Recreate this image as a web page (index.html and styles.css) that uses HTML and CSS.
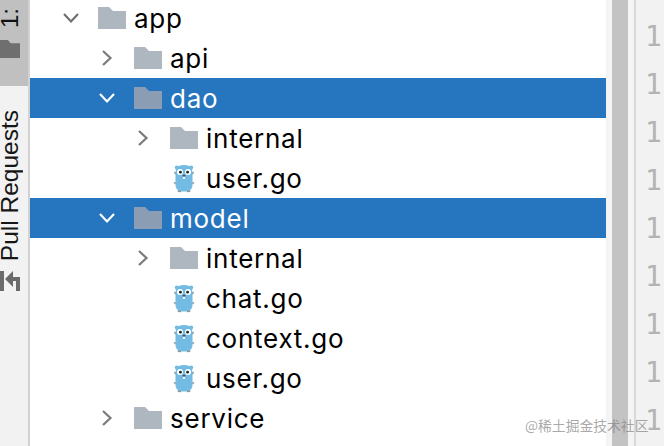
FILE: index.html
```html
<!DOCTYPE html>
<html lang="en">
<head>
<meta charset="utf-8">
<title>Project tree</title>
<link rel="stylesheet" href="styles.css">
</head>
<body>
<svg class="defs" width="0" height="0" aria-hidden="true">
  <defs>
    <symbol id="folder" viewBox="0 0 28 22" preserveAspectRatio="none"><path d="M0 0H11L15 4H28V22H0Z"/></symbol>
    <symbol id="chev-down" viewBox="0 0 18 12"><path d="M2 2L9 9.500L16 2" fill="none" stroke="currentColor" stroke-width="2.200"/></symbol>
    <symbol id="chev-right" viewBox="0 0 12 18"><path d="M2 2L9.500 9L2 16" fill="none" stroke="currentColor" stroke-width="2.200"/></symbol>
    <symbol id="gopher" viewBox="0 0 22 29">
      <ellipse cx="2.600" cy="9" rx="1.600" ry="1.200" fill="#8fa3ad"/>
      <ellipse cx="19.400" cy="9" rx="1.600" ry="1.200" fill="#8fa3ad"/>
      <ellipse cx="2.200" cy="19" rx="1.600" ry="1" fill="#9aa8ae"/>
      <ellipse cx="19.800" cy="19" rx="1.600" ry="1" fill="#9aa8ae"/>
      <ellipse cx="6.500" cy="27" rx="2" ry="1.300" fill="#8b979c"/>
      <ellipse cx="15.500" cy="27" rx="2" ry="1.300" fill="#8b979c"/>
      <circle cx="4" cy="3.600" r="2.200" fill="#74b9e0"/>
      <circle cx="18" cy="3.600" r="2.200" fill="#74b9e0"/>
      <path d="M11 1C17 1 19.500 4.500 19.500 9V21C19.500 25.500 16 27.500 11 27.500C6 27.500 2.500 25.500 2.500 21V9C2.500 4.500 5 1 11 1Z" fill="#74bbe3"/>
      <circle cx="7" cy="8" r="3" fill="#fff"/>
      <circle cx="15" cy="8" r="3" fill="#fff"/>
      <circle cx="7.400" cy="8.200" r="1.400" fill="#1c2228"/>
      <circle cx="14.600" cy="8.200" r="1.400" fill="#1c2228"/>
      <ellipse cx="11" cy="11.800" rx="1.500" ry="1" fill="#54443c"/>
      <rect x="10" y="12.800" width="2" height="2" fill="#fff"/>
    </symbol>
  </defs>
</svg>
<div class="window">
  <aside class="rail">
    <div class="rail-active">
      <span class="rail-num">1:</span>
      <svg class="rail-folder" width="20" height="18"><use href="#folder"/></svg>
    </div>
    <div class="rail-tab">
      <span class="rail-label">Pull Requests</span>
      <svg class="rail-arrow" width="20" height="21" viewBox="0 0 20 21">
        <path d="M0 0H4V20H0Z" fill="#6b6b6b"/>
        <path d="M5 8L13 0V6H20V20H16V10H13V16Z" fill="#6b6b6b"/>
      </svg>
    </div>
  </aside>
  <main class="tree">
    <div class="row lvl0"><svg class="chev" width="18" height="12"><use href="#chev-down"/></svg><svg class="folder" width="28" height="22"><use href="#folder"/></svg><span>app</span></div>
    <div class="row lvl1"><svg class="chev-r" width="12" height="18"><use href="#chev-right"/></svg><svg class="folder" width="28" height="22"><use href="#folder"/></svg><span>api</span></div>
    <div class="row lvl1 selected"><svg class="chev" width="18" height="12"><use href="#chev-down"/></svg><svg class="folder" width="28" height="22"><use href="#folder"/></svg><span>dao</span></div>
    <div class="row lvl2"><svg class="chev-r" width="12" height="18"><use href="#chev-right"/></svg><svg class="folder" width="28" height="22"><use href="#folder"/></svg><span>internal</span></div>
    <div class="row file"><svg class="gopher" width="22" height="29"><use href="#gopher"/></svg><span>user.go</span></div>
    <div class="row lvl1 selected"><svg class="chev" width="18" height="12"><use href="#chev-down"/></svg><svg class="folder" width="28" height="22"><use href="#folder"/></svg><span>model</span></div>
    <div class="row lvl2"><svg class="chev-r" width="12" height="18"><use href="#chev-right"/></svg><svg class="folder" width="28" height="22"><use href="#folder"/></svg><span>internal</span></div>
    <div class="row file"><svg class="gopher" width="22" height="29"><use href="#gopher"/></svg><span>chat.go</span></div>
    <div class="row file"><svg class="gopher" width="22" height="29"><use href="#gopher"/></svg><span>context.go</span></div>
    <div class="row file"><svg class="gopher" width="22" height="29"><use href="#gopher"/></svg><span>user.go</span></div>
    <div class="row lvl1"><svg class="chev-r" width="12" height="18"><use href="#chev-right"/></svg><svg class="folder" width="28" height="22"><use href="#folder"/></svg><span>service</span></div>
  </main>
  <div class="scroll"><div class="thumb"></div></div>
  <div class="gutter">
    <span>1</span><span>1</span><span>1</span><span>1</span><span>1</span><span>1</span><span>1</span><span>1</span><span>1</span>
  </div>
</div>
<div class="watermark">@稀土掘金技术社区</div>
</body>
</html>
```

FILE: styles.css
```css
* { box-sizing: border-box; }
html, body { margin: 0; height: 100%; overflow: hidden; background: #fff; }
.defs { position: absolute; }
.window {
  display: flex;
  width: 664px;
  height: 446px;
  font-family: "Inter", "Liberation Sans", sans-serif;
}
.rail {
  flex: 0 0 30px;
  min-width: 0;
  overflow: hidden;
  background: #f2f2f2;
  border-right: 2px solid #d2d2d2;
  display: flex;
  flex-direction: column;
}
.rail-active {
  height: 86px;
  background: #c0c0c0;
  display: flex;
  flex-direction: column;
  align-items: flex-start;
}
.rail-num {
  writing-mode: vertical-rl;
  transform: rotate(180deg);
  font-family: "Liberation Sans", sans-serif;
  font-size: 24px;
  line-height: 20px;
  height: 28px;
  flex: none;
  color: #111;
}
.rail-folder { fill: #6f6f6f; margin-top: 12px; flex: none; }
.rail-tab {
  display: flex;
  flex-direction: column;
  align-items: flex-start;
  padding-top: 24px;
}
.rail-label {
  writing-mode: vertical-rl;
  transform: rotate(180deg);
  font-family: "Liberation Sans", sans-serif;
  font-size: 24.500px;
  line-height: 20px;
  color: #161616;
  white-space: nowrap;
}
.rail-arrow { margin-top: 10px; flex: none; }
.tree {
  flex: 0 0 576px;
  margin-top: -2px;
  font-size: 26px;
  color: #000;
}
.row {
  height: 40px;
  display: flex;
  align-items: center;
  white-space: nowrap;
}
.row span { letter-spacing: 0.750px; }
.row .folder { fill: #aeb6bf; flex: none; margin-right: 8px; }
.chev { color: #6f6f6f; flex: none; margin-right: 18px; }
.chev-r { color: #7a7a7a; flex: none; }
.lvl0 { padding-left: 32px; }
.lvl1 { padding-left: 71px; }
.lvl1 .chev { margin-left: -3px; margin-right: 18px; }
.lvl1 .chev-r { margin-right: 21px; }
.lvl2 { padding-left: 107px; }
.lvl2 .chev-r { margin-right: 21px; }
.file { padding-left: 143px; }
.gopher { flex: none; margin-right: 11px; }
.selected { background: #2675bf; color: #fff; }
.selected .chev { color: #fff; }
.selected .folder { fill: #8a9db3; }
.scroll {
  flex: 0 0 28px;
  background: #f4f4f4;
  padding-left: 6px;
}
.thumb { width: 16px; height: 100%; background: #c3c3c3; }
.gutter {
  flex: 1;
  min-width: 0;
  background: #f2f2f2;
  border-left: 2px solid #d8d8d8;
  display: flex;
  flex-direction: column;
  gap: 8px;
  padding: 17px 0 0 9px;
  font-family: "DejaVu Sans Mono", monospace;
  font-size: 28px;
  line-height: 40px;
  color: #b4b4b4;
}
.gutter span { height: 40px; flex: none; }
.watermark {
  position: absolute;
  left: 525px;
  top: 416px;
  font-family: "Noto Sans CJK SC", sans-serif;
  font-size: 13.800px;
  line-height: 18px;
  color: rgba(130,130,130,0.7);
  white-space: nowrap;
}
```
